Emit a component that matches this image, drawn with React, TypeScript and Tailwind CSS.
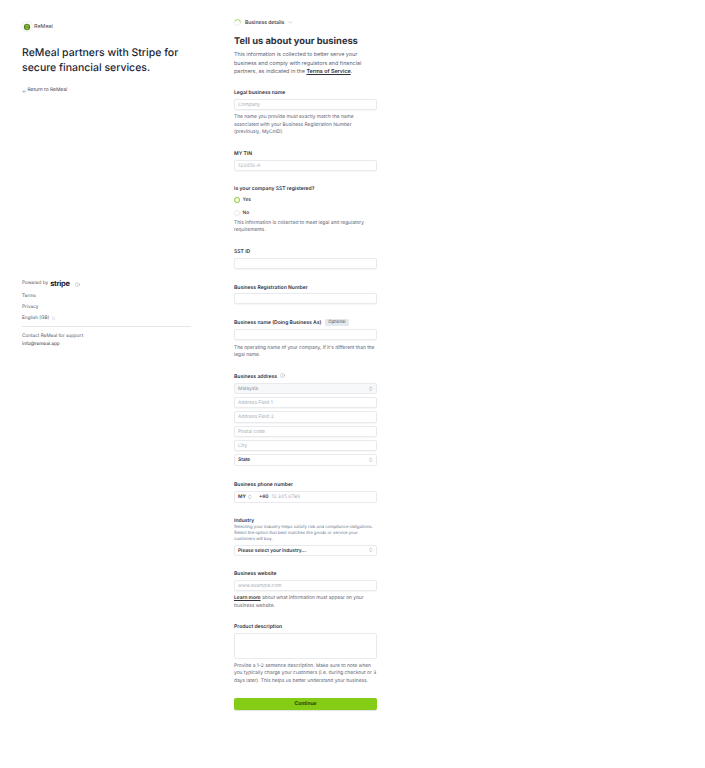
import React from 'react';
import { ArrowLeft, ChevronDown, ChevronsUpDown, Info } from 'lucide-react';

const Label: React.FC<{ children: React.ReactNode }> = ({ children }) => (
  <div className="h-[8px] text-[5.05px] leading-[10px] font-semibold whitespace-nowrap text-[#30313d]">{children}</div>
);

const Field: React.FC<{ placeholder?: string; className?: string }> = ({ placeholder, className = 'mt-[2.5px]' }) => (
  <div className={`flex h-[11.3px] items-center rounded-[2px] border border-[#e8eaed] bg-white px-[3px] pt-[2px] text-[4.85px] text-[#a3acb9] shadow-[0_0.5px_1px_rgba(0,0,0,0.04)] ${className}`}>
    {placeholder}
  </div>
);

const Select: React.FC<{ value: string; muted?: boolean; className?: string }> = ({ value, muted, className = 'mt-[3px]' }) => (
  <div
    className={`flex h-[11.3px] items-center justify-between rounded-[2px] border border-[#e8eaed] px-[3px] text-[4.85px] ${
      muted ? 'bg-[#f6f8fa] font-normal text-[#8792a2]' : 'bg-white font-semibold text-[#30313d]'
    } ${className}`}
  >
    <span className="pt-[2px]">{value}</span>
    <ChevronsUpDown size={5.5} strokeWidth={1.5} className="text-[#545969]" />
  </div>
);

const Help: React.FC<{ children: React.ReactNode; className?: string }> = ({ children, className = 'mt-[3px]' }) => (
  <p className={`-mb-[1px] pt-[1px] text-[4.85px] leading-[7.3px] text-[#596171] ${className}`}>{children}</p>
);

const Sidebar: React.FC = () => (
  <aside className="w-[169px] shrink-0 pt-[21px]">
    <div className="flex h-[11px] items-center gap-[2.5px]">
      <div className="flex h-[9.5px] w-[9.5px] items-center justify-center rounded-full bg-white shadow-[0_0_2px_rgba(0,0,0,0.2)]">
        <svg viewBox="0 0 10 10" className="h-[8px] w-[8px]">
          <circle cx="5" cy="5" r="4" fill="#5f8f2a" />
          <circle cx="5" cy="5" r="2.4" fill="#9ccb3b" />
          <path d="M1.5 5h7" stroke="#2f3b2a" strokeWidth="0.7" />
        </svg>
      </div>
      <span className="pt-[2px] text-[5.4px] text-[#414552]">ReMeal</span>
    </div>
    <h2 className="mt-[14px] text-[10.5px] leading-[14.5px] font-medium text-[#1a1f36]">
      ReMeal partners with Stripe for secure financial services.
    </h2>
    <div className="mt-[12px] flex h-[8px] items-center gap-[0.5px] text-[4.9px] text-[#414552]">
      <ArrowLeft size={5} strokeWidth={1.4} />
      <span>Return to ReMeal</span>
    </div>
    <div className="mt-[185px] flex h-[8px] items-center gap-[2px] text-[4.7px] text-[#545969]">
      <span>Powered by</span>
      <span className="text-[7.5px] leading-[8px] font-bold tracking-[-0.3px] text-[#1a1f36]">stripe</span>
      <Info size={5} strokeWidth={1} className="ml-[3px]" />
    </div>
    <div className="mt-[3.5px] h-[8px] text-[4.7px] leading-[8px] text-[#545969]">Terms</div>
    <div className="mt-[3px] h-[8px] text-[4.7px] leading-[8px] text-[#545969]">Privacy</div>
    <div className="mt-[3.7px] flex h-[8px] items-center gap-[1.5px] text-[4.7px] text-[#545969]">
      <span>English (GB)</span>
      <ChevronsUpDown size={5} strokeWidth={1.2} />
    </div>
    <div className="mt-[3.5px] border-t border-[#e3e6ea] pt-[5px] text-[4.7px] leading-[8px] text-[#545969]">
      <div>Contact ReMeal for support</div>
      <div className="text-[#30313d]">info@remeal.app</div>
    </div>
  </aside>
);

const Form: React.FC = () => (
  <main className="ml-[43px] w-[143px] shrink-0 pt-[18px]">
    <div className="flex h-[9px] items-center gap-[3px] text-[5px] font-semibold text-[#414552]">
      <svg viewBox="0 0 10 10" className="mr-[1px] h-[7px] w-[7px]">
        <circle cx="5" cy="5" r="4.2" fill="none" stroke="#dfe3e8" strokeWidth="0.9" />
        <path d="M5 .8A4.2 4.2 0 0 1 9.2 5" fill="none" stroke="#84cc16" strokeWidth="0.9" />
        <path d="M1 3.6A4.2 4.2 0 0 1 5 .8" fill="none" stroke="#84cc16" strokeWidth="0.9" />
      </svg>
      <span className="pt-[2px]">Business details</span>
      <ChevronDown size={5} strokeWidth={1.4} className="ml-[1px]" />
    </div>
    <h1 className="mt-[8px] text-[9.3px] leading-[14px] font-bold whitespace-nowrap text-[#30313d]">Tell us about your business</h1>
    <p className="mt-[2px] text-[5.4px] leading-[8.7px] text-[#596171]">
      This information is collected to better serve your business and comply with regulators and financial partners, as
      indicated in the <span className="font-semibold text-[#30313d] underline">Terms of Service</span>.
    </p>

    <div className="mt-[11px]">
      <Label>Legal business name</Label>
      <Field placeholder="Company" />
      <Help className="mt-[3.5px]">
        The name you provide must exactly match the name associated with your Business Registration Number (previously,
        MyCoID).
      </Help>
    </div>

    <div className="mt-[13.8px]">
      <Label>MY TIN</Label>
      <Field placeholder="123456-A" />
    </div>

    <div className="mt-[13.2px]">
      <Label>Is your company SST registered?</Label>
      <div className="mt-[3.5px] flex h-[8px] items-center gap-[3px] text-[4.85px] font-medium text-[#30313d]">
        <div className="-ml-[0.5px] h-[6px] w-[6px] rounded-full border-[1.5px] border-[#84cc16] bg-white" />
        <span className="pt-[2px]">Yes</span>
      </div>
      <div className="mt-[5px] flex h-[8px] items-center gap-[3px] text-[4.85px] font-medium text-[#30313d]">
        <div className="-ml-[0.5px] h-[6px] w-[6px] rounded-full border border-[#e8eaed] bg-white" />
        <span className="pt-[2px]">No</span>
      </div>
      <Help className="mt-[2.35px]">This information is collected to meet legal and regulatory requirements.</Help>
    </div>

    <div className="mt-[13.5px]">
      <Label>SST ID</Label>
      <Field />
    </div>

    <div className="mt-[13.7px]">
      <Label>Business Registration Number</Label>
      <Field />
    </div>

    <div className="mt-[14.2px]">
      <div className="flex h-[8px] items-center gap-[4px]">
        <Label>Business name (Doing Business As)</Label>
        <span className="rounded-[1px] bg-[#e3eaee] px-[3px] text-[4.4px] leading-[7px] text-[#545969]">Optional</span>
      </div>
      <Field />
      <Help className="mt-[3.5px]">The operating name of your company, if it's different than the legal name.</Help>
    </div>

    <div className="mt-[13.5px]">
      <div className="flex h-[8px] items-center gap-[3px]">
        <Label>Business address</Label>
        <Info size={5} strokeWidth={1} className="text-[#545969]" />
      </div>
      <Select value="Malaysia" muted />
      <Field placeholder="Address Field 1" className="mt-[3px]" />
      <Field placeholder="Address Field 2" className="mt-[3px]" />
      <Field placeholder="Postal code" className="mt-[3px]" />
      <Field placeholder="City" className="mt-[3px]" />
      <Select value="State" />
    </div>

    <div className="mt-[14.2px]">
      <Label>Business phone number</Label>
      <div className="mt-[3.5px] flex h-[11.3px] items-center rounded-[2px] border border-[#e8eaed] bg-white px-[3px] text-[4.85px]">
        <span className="pt-[2px] font-semibold text-[#30313d]">MY</span>
        <ChevronsUpDown size={5.5} strokeWidth={1.5} className="ml-[1.5px] text-[#545969]" />
        <span className="ml-[6px] pt-[2px] font-semibold text-[#30313d]">+60</span>
        <span className="ml-[3px] pt-[2px] text-[#a3acb9]">12 345 6789</span>
      </div>
    </div>

    <div className="mt-[13.2px]">
      <Label>Industry</Label>
      <p className="-mb-[1px] pt-[1px] text-[4.25px] leading-[6px] text-[#687385]">
        Selecting your industry helps satisfy risk and compliance obligations. Select the option that best matches the
        goods or service your customers will buy.
      </p>
      <Select value="Please select your industry..." className="mt-[2.7px]" />
    </div>

    <div className="mt-[13.3px]">
      <Label>Business website</Label>
      <Field placeholder="www.example.com" className="mt-[3px]" />
      <Help>
        <span className="font-semibold text-[#30313d] underline">Learn more</span> about what information must appear on
        your business website.
      </Help>
    </div>

    <div className="mt-[13.4px]">
      <Label>Product description</Label>
      <div className="mt-[2.6px] h-[26px] rounded-[2px] border border-[#e8eaed] bg-white" />
      <Help>
        Provide a 1-2 sentence description. Make sure to note when you typically charge your customers (i.e. during
        checkout or 3 days later). This helps us better understand your business.
      </Help>
    </div>

    <div className="mt-[13.8px] flex h-[12.7px] items-center justify-center rounded-[2px] bg-[#84cc16] pt-[2px] text-[5px] font-semibold text-[#1a2b05] shadow-[0_0.5px_1px_rgba(0,0,0,0.12)]">
      Continue
    </div>
  </main>
);

export default function App() {
  return (
    <div className="flex min-h-[768px] bg-white pl-[22px] font-['Inter',sans-serif] [text-rendering:geometricPrecision]">
      <Sidebar />
      <Form />
    </div>
  );
}
